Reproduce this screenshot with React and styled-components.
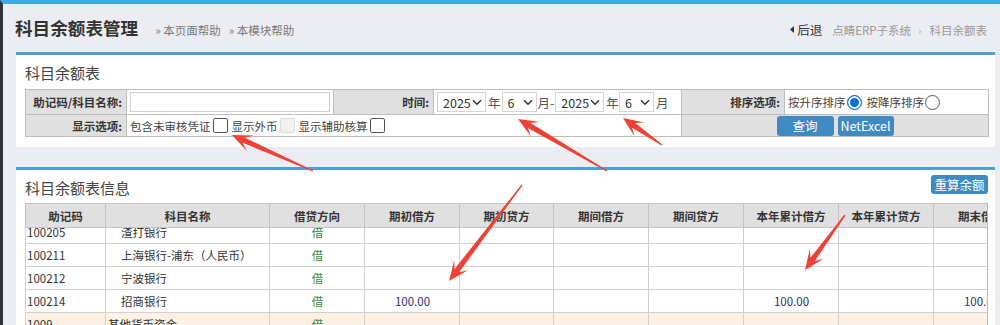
import React, { useLayoutEffect, useRef } from 'react';
import styled, { createGlobalStyle } from 'styled-components';

const FONT = '"Noto Sans CJK SC", "Microsoft YaHei", sans-serif';

const GlobalStyle = createGlobalStyle`
  html, body {
    margin: 0;
    padding: 0;
    overflow: hidden;
    background: #ebedf2;
  }
  body {
    font-family: ${FONT};
    font-size: 11.5px;
    color: #333;
  }
`;

const COLS = [80, 164, 95, 95, 94, 95, 95, 95, 95, 95, 95];
const HEADS = ['助记码', '科目名称', '借贷方向', '期初借方', '期初贷方', '期间借方', '期间贷方', '本年累计借方', '本年累计贷方', '期末借方', '期末贷方'];

const rows = [
  { code: '100205', name: '渣打银行', child: true },
  { code: '100211', name: '上海银行-浦东（人民币）', child: true },
  { code: '100212', name: '宁波银行', child: true },
  { code: '100214', name: '招商银行', child: true, amounts: { 3: '100.00', 7: '100.00', 9: '100.00' } },
  { code: '1009', name: '其他货币资金', parent: true },
  { code: '100901', name: '外埠存款', child: true },
  { code: '100902', name: '银行本票', child: true },
  { code: '100903', name: '银行汇票', child: true },
];

const ARROWS = [
  [313, 171, 232, 135],
  [607, 171, 518, 119],
  [662, 145, 623, 118],
  [522, 185, 449, 281],
  [845, 215, 805, 270],
];

function arrowPoints([x1, y1, x2, y2]) {
  const len = Math.hypot(x2 - x1, y2 - y1);
  const dx = (x2 - x1) / len;
  const dy = (y2 - y1) / len;
  const nx = -dy;
  const ny = dx;
  const p = (bx, by, along, side) => `${(bx - dx * along + nx * side).toFixed(1)},${(by - dy * along + ny * side).toFixed(1)}`;
  return [
    p(x1, y1, 0, 0.6),
    p(x2, y2, 13, 2.8),
    p(x2, y2, 20, 8.5),
    p(x2, y2, 0, 0),
    p(x2, y2, 20, -8.5),
    p(x2, y2, 13, -2.8),
    p(x1, y1, 0, -0.6),
  ].join(' ');
}

function Chevron() {
  return (
    <ChevronIcon width="10" height="7" viewBox="0 0 10 7">
      <path d="M1 1.2 L5 5.2 L9 1.2" fill="none" stroke="#333" strokeWidth="1.5" />
    </ChevronIcon>
  );
}

function DateSelect({ width, value }) {
  return (
    <SelectWrap>
      <Select $w={width} defaultValue={value}>
        <option>{value}</option>
      </Select>
      <Chevron />
    </SelectWrap>
  );
}

function ColGroup() {
  return (
    <colgroup>
      {COLS.map((w, i) => (
        <col key={i} style={{ width: w }} />
      ))}
    </colgroup>
  );
}

export default function App() {
  const bodyRef = useRef(null);

  useLayoutEffect(() => {
    if (bodyRef.current) bodyRef.current.scrollTop = 8;
  }, []);

  return (
    <Root>
      <GlobalStyle />
      <Page>
        <Header>
          <Title>科目余额表管理</Title>
          <HelpLinks>
            <HelpLink>» 本页面帮助</HelpLink>
            <HelpLink>» 本模块帮助</HelpLink>
          </HelpLinks>
          <Crumbs>
            <Back>
              <svg width="4" height="7" viewBox="0 0 4 7">
                <path d="M4 0 L0 3.5 L4 7 Z" fill="#333" />
              </svg>
              后退
            </Back>
            <Crumb>点睛ERP子系统</Crumb>
            <Sep>›</Sep>
            <Crumb>科目余额表</Crumb>
          </Crumbs>
        </Header>

        <Panel>
          <PanelTitle>科目余额表</PanelTitle>
          <FormTable>
            <colgroup>
              <col style={{ width: 101 }} />
              <col style={{ width: 207 }} />
              <col style={{ width: 100 }} />
              <col style={{ width: 248 }} />
              <col style={{ width: 103 }} />
              <col style={{ width: 204 }} />
            </colgroup>
            <tbody>
              <FormRow $h={25}>
                <Label>助记码/科目名称:</Label>
                <Field>
                  <TextInput />
                </Field>
                <Label>时间:</Label>
                <Field>
                  <Inline>
                    <DateSelect width={49} value="2025" />
                    <Unit $l={2} $r={1}>年</Unit>
                    <DateSelect width={35} value="6" />
                    <Unit $l={1} $r={1}>月-</Unit>
                    <DateSelect width={49} value="2025" />
                    <Unit $l={2} $r={0}>年</Unit>
                    <DateSelect width={35} value="6" />
                    <Unit $l={2} $r={0}>月</Unit>
                  </Inline>
                </Field>
                <Label>排序选项:</Label>
                <Field>
                  <Inline>
                    <OptText>按升序排序</OptText>
                    <Radio type="radio" name="sort" defaultChecked />
                    <OptText $l={5}>按降序排序</OptText>
                    <Radio type="radio" name="sort" />
                  </Inline>
                </Field>
              </FormRow>
              <FormRow $h={22}>
                <Label>显示选项:</Label>
                <Field colSpan={3}>
                  <Inline>
                    <OptText>包含未审核凭证</OptText>
                    <Check type="checkbox" />
                    <OptText $l={4}>显示外币</OptText>
                    <Check type="checkbox" disabled />
                    <OptText $l={4}>显示辅助核算</OptText>
                    <Check type="checkbox" />
                  </Inline>
                </Field>
                <ActionCell colSpan={2}>
                  <Button $w={57}>查询</Button>
                  <Button $w={56}>NetExcel</Button>
                </ActionCell>
              </FormRow>
            </tbody>
          </FormTable>
        </Panel>

        <Panel $gap={20}>
          <PanelHead>
            <PanelTitle as="div">科目余额表信息</PanelTitle>
            <Button $w={57} $h={19} $up>重算余额</Button>
          </PanelHead>
          <GridWrap>
            <Grid>
              <ColGroup />
              <thead>
                <tr>
                  {HEADS.map((h) => (
                    <HeadCell key={h}>{h}</HeadCell>
                  ))}
                </tr>
              </thead>
            </Grid>
            <GridBody ref={bodyRef}>
              <Grid>
                <ColGroup />
                <tbody>
                  {rows.map((r) => (
                    <BodyRow key={r.code} $parent={r.parent}>
                      <Cell>{r.code}</Cell>
                      <Cell $indent={r.child ? 15 : 2}>{r.name}</Cell>
                      <Cell $center $green>借</Cell>
                      {COLS.slice(3).map((_, i) => (
                        <Cell key={i} $center $money>
                          {r.amounts && r.amounts[i + 3]}
                        </Cell>
                      ))}
                    </BodyRow>
                  ))}
                </tbody>
              </Grid>
            </GridBody>
          </GridWrap>
        </Panel>
      </Page>

      <Arrows width="1000" height="325" viewBox="0 0 1000 325">
        {ARROWS.map((a, i) => (
          <polygon key={i} points={arrowPoints(a)} fill="#ec4238" />
        ))}
      </Arrows>
    </Root>
  );
}

const Root = styled.div`
  position: relative;
  width: 1000px;
  height: 325px;
  overflow: hidden;
`;

const Page = styled.div`
  height: 321px;
  border-top: 4px solid #40a8e8;
  border-left: 3px solid #2f3238;
  background: #ebedf2;
`;

const Header = styled.div`
  display: flex;
  align-items: center;
  height: 48px;
  padding: 0 13px 0 12px;
`;

const Title = styled.h1`
  margin: 0;
  font-size: 17.6px;
  font-weight: bold;
  color: #333;
  line-height: 1;
`;

const HelpLinks = styled.div`
  display: flex;
  gap: 8px;
  margin: 3px 0 0 17px;
`;

const HelpLink = styled.span`
  font-size: 11.5px;
  color: #7a7a7a;
`;

const Crumbs = styled.div`
  display: flex;
  align-items: center;
  margin: 3px 0 0 auto;
  font-size: 11.5px;
  color: #9a9a9a;
`;

const Back = styled.span`
  display: inline-flex;
  align-items: center;
  gap: 3px;
  font-size: 12.5px;
  color: #333;
  margin-right: 10px;
`;

const Crumb = styled.span``;

const Sep = styled.span`
  margin: 0 8px 0 7px;
  color: #b0b0b0;
`;

const Panel = styled.section`
  margin: ${(p) => p.$gap || 0}px 5px 0 13px;
  padding: 0 7px 10px 9px;
  background: #fff;
  border-top: 3px solid #4e9fd6;
`;

const PanelTitle = styled.h2`
  margin: 0;
  height: 34px;
  display: flex;
  align-items: center;
  padding-top: 1px;
  box-sizing: border-box;
  font-size: 15px;
  font-weight: normal;
  color: #444;
`;

const PanelHead = styled.div`
  display: flex;
  align-items: center;
  justify-content: space-between;
  height: 33px;
`;

const FormTable = styled.table`
  width: 963px;
  border-collapse: collapse;
  table-layout: fixed;
`;

const FormRow = styled.tr`
  height: ${(p) => p.$h}px;
`;

const Label = styled.td`
  background: #e0e0e0;
  border: 1px solid #bdbdbd;
  padding: 0 4px 0 0;
  text-align: right;
  font-weight: bold;
  font-size: 11.5px;
  color: #333;
  white-space: nowrap;
`;

const Field = styled.td`
  background: #fff;
  border: 1px solid #bdbdbd;
  padding: 0 2px 0 3px;
  white-space: nowrap;
`;

const ActionCell = styled.td`
  background: #e0e0e0;
  border: 1px solid #bdbdbd;
  text-align: center;
  padding: 0;
  font-size: 0;
`;

const TextInput = styled.input`
  display: block;
  width: 200px;
  height: 20px;
  box-sizing: border-box;
  border: 1px solid #cfcfcf;
  padding: 0 4px;
  outline: none;
`;

const Inline = styled.div`
  display: flex;
  align-items: center;
`;

const SelectWrap = styled.span`
  position: relative;
  display: inline-block;
  height: 20px;
`;

const Select = styled.select`
  appearance: none;
  display: block;
  width: ${(p) => p.$w}px;
  height: 20px;
  box-sizing: border-box;
  border: 1px solid #d4d4d4;
  border-radius: 0;
  background: #fff;
  padding: 0 0 0 5px;
  font-family: ${FONT};
  font-size: 12.5px;
  color: #333;
  outline: none;
`;

const ChevronIcon = styled.svg`
  position: absolute;
  right: 4px;
  top: 7px;
  pointer-events: none;
`;

const Unit = styled.span`
  font-size: 12.5px;
  color: #555;
  margin: 0 ${(p) => p.$r}px 0 ${(p) => p.$l}px;
`;

const OptText = styled.span`
  font-size: 11.5px;
  color: #444;
  margin-left: ${(p) => p.$l || 0}px;
`;

const Check = styled.input`
  appearance: none;
  width: 15px;
  height: 15px;
  margin: 0 0 0 2px;
  box-sizing: border-box;
  border: 1px solid #555;
  border-radius: 2px;
  background: #fff;

  &:disabled {
    border-color: #dcdcdc;
    background: #f1f1f1;
  }
`;

const Radio = styled.input`
  appearance: none;
  width: 15px;
  height: 15px;
  margin: 0 0 0 1px;
  box-sizing: border-box;
  border: 1px solid #555;
  border-radius: 50%;
  background: #fff;

  &:checked {
    border: 1px solid #0b6fd6;
    background: #0b6fd6;
    box-shadow: inset 0 0 0 2px #fff;
  }
`;

const Button = styled.button`
  display: inline-block;
  vertical-align: middle;
  width: ${(p) => p.$w}px;
  height: ${(p) => p.$h || 20}px;
  margin: ${(p) => (p.$up ? '0 0 4px 0' : '0 2px')};
  padding: 0;
  border: none;
  border-radius: 3px;
  background: #3d8bc2;
  color: #fff;
  font-family: ${FONT};
  font-size: 12.5px;
  line-height: ${(p) => p.$h || 20}px;
`;

const GridWrap = styled.div`
  width: 962px;
  overflow: hidden;
  border-right: 1px solid #bbb;
`;

const Grid = styled.table`
  width: ${COLS.reduce((a, b) => a + b, 0)}px;
  border-collapse: collapse;
  table-layout: fixed;
`;

const HeadCell = styled.th`
  height: 23px;
  background: #e0e0e0;
  border: 1px solid #c4c4c4;
  font-size: 11.5px;
  font-weight: bold;
  color: #333;
  text-align: center;
  padding: 0;
  white-space: nowrap;
`;

const GridBody = styled.div`
  height: 120px;
  overflow: hidden;
`;

const BodyRow = styled.tr`
  height: 23px;
  background: ${(p) => (p.$parent ? '#fdf1e5' : '#fff')};
`;

const Cell = styled.td`
  border: 1px solid #d0d0d0;
  padding: 0 0 0 ${(p) => (p.$indent != null ? p.$indent : 1)}px;
  text-align: ${(p) => (p.$center ? 'center' : 'left')};
  font-size: 11.5px;
  color: ${(p) => (p.$green ? '#3b8a3b' : p.$money ? '#262f66' : '#333')};
  white-space: nowrap;
  overflow: hidden;
`;

const Arrows = styled.svg`
  position: absolute;
  left: 0;
  top: 0;
  pointer-events: none;
`;
